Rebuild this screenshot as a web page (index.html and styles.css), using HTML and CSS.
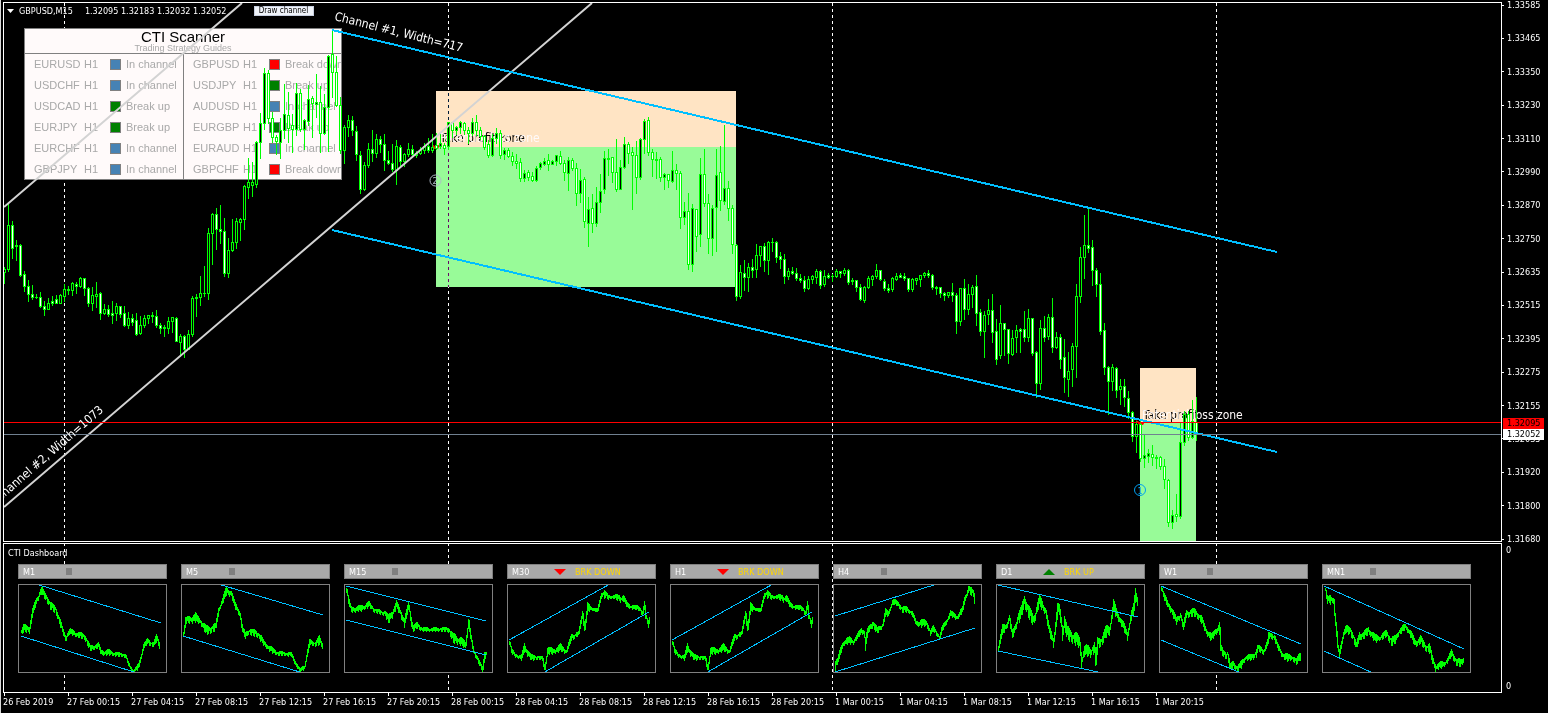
FILE: index.html
```html
<!DOCTYPE html>
<html lang="en">
<head>
<meta charset="utf-8">
<title>GBPUSD,M15</title>
<link rel="stylesheet" href="styles.css">
</head>
<body>
<main class="terminal">
  <section class="plot" aria-label="GBPUSD M15 chart">
    <svg class="layer" viewBox="4 3 1497 538" preserveAspectRatio="none">
      <rect class="loss" x="436" y="91" width="300" height="56"/>
      <rect class="profit" x="436" y="147" width="300" height="140"/>
      <rect class="loss" x="1140" y="368" width="56" height="55"/>
      <rect class="profit" x="1140" y="423" width="56" height="118"/>
      <path class="session" d="M64.5 3V541M448.5 3V541M832.5 3V541M1216.5 3V541"/>
    </svg>
    <div class="scanner">
      <header class="scanner-head">
        <h1>CTI Scanner</h1>
        <p>Trading Strategy Guides</p>
      </header>
      <div class="scanner-body">
        <ul class="pairs">
          <li><span>EURUSD</span><span>H1</span><i class="dot inside"></i><span>In channel</span></li>
          <li><span>USDCHF</span><span>H1</span><i class="dot inside"></i><span>In channel</span></li>
          <li><span>USDCAD</span><span>H1</span><i class="dot up"></i><span>Break up</span></li>
          <li><span>EURJPY</span><span>H1</span><i class="dot up"></i><span>Break up</span></li>
          <li><span>EURCHF</span><span>H1</span><i class="dot inside"></i><span>In channel</span></li>
          <li><span>GBPJPY</span><span>H1</span><i class="dot inside"></i><span>In channel</span></li>
        </ul>
        <ul class="pairs">
          <li><span>GBPUSD</span><span>H1</span><i class="dot down"></i><span>Break down</span></li>
          <li><span>USDJPY</span><span>H1</span><i class="dot up"></i><span>Break up</span></li>
          <li><span>AUDUSD</span><span>H1</span><i class="dot inside"></i><span>In channel</span></li>
          <li><span>EURGBP</span><span>H1</span><i class="dot up"></i><span>Break up</span></li>
          <li><span>EURAUD</span><span>H1</span><i class="dot inside"></i><span>In channel</span></li>
          <li><span>GBPCHF</span><span>H1</span><i class="dot down"></i><span>Break down</span></li>
        </ul>
      </div>
    </div>
    <svg class="layer" viewBox="4 3 1497 538" preserveAspectRatio="none">
      <text class="zone-text dark" x="440" y="142">Take profit zone</text>
      <text class="zone-text pale" x="439" y="142">Potential loss zone</text>
      <text class="zone-text dark" x="1143" y="419">Take profit zone</text>
      <text class="zone-text pale" x="1142" y="419">Potential loss zone</text>
      <path class="entry" d="M432 144l4 3 4-3-2 5h-4zM1136 420l5 3 5-3-3 5h-4z"/>
      <g id="candles" shape-rendering="crispEdges"></g>
      <path class="trend silver" d="M4 207L242 3M4 507L592 3"/>
      <path class="trend blue" d="M332 30L1277 252M332 230L1277 452"/>
      <path class="ask" d="M4 422.5H1501"/>
      <path class="bid" d="M4 434.5H1501"/>
      <text class="channel-text" transform="translate(334 20) rotate(14)">Channel #1, Width=717</text>
      <text class="channel-text" text-anchor="end" transform="translate(104 411) rotate(-41)">Channel #2, Width=1073</text>
      <g class="badge silver"><circle cx="435.500" cy="180.500" r="5.500"/><text x="435" y="184">2</text></g>
      <g class="badge blue"><circle cx="1140" cy="490" r="5.500"/><text x="1140" y="494">1</text></g>
    </svg>
    <div class="caption">
      <svg class="caret" viewBox="0 0 7 4"><path d="M0 0H7L3.500 4z"/></svg>
      <span class="symbol">GBPUSD,M15</span>
      <span class="quotes">1.32095 1.32183 1.32032 1.32052</span>
      <button class="draw" type="button">Draw channel</button>
    </div>
  </section>

  <aside class="scale">
    <ol class="prices">
      <li>1.33585</li><li>1.33465</li><li>1.33350</li><li>1.33230</li><li>1.33110</li><li>1.32990</li>
      <li>1.32870</li><li>1.32750</li><li>1.32635</li><li>1.32515</li><li>1.32395</li><li>1.32275</li>
      <li>1.32155</li><li>1.32035</li><li>1.31920</li><li>1.31800</li><li>1.31680</li>
    </ol>
    <span class="tag tag-ask">1.32095</span>
    <span class="tag tag-bid">1.32052</span>
  </aside>

  <section class="dash">
    <svg class="layer" viewBox="4 544 1497 148" preserveAspectRatio="none">
      <path class="session" d="M64.5 543V692M448.5 543V692M832.5 543V692M1216.5 543V692"/>
    </svg>
    <h2 class="dash-title">CTI Dashboard</h2>
    <div class="cards" id="cards"></div>
  </section>
  <aside class="dash-scale"><span>0</span><span>0</span></aside>

  <ol class="times">
    <li>26 Feb 2019</li><li>27 Feb 00:15</li><li>27 Feb 04:15</li><li>27 Feb 08:15</li><li>27 Feb 12:15</li>
    <li>27 Feb 16:15</li><li>27 Feb 20:15</li><li>28 Feb 00:15</li><li>28 Feb 04:15</li><li>28 Feb 08:15</li>
    <li>28 Feb 12:15</li><li>28 Feb 16:15</li><li>28 Feb 20:15</li><li>1 Mar 00:15</li><li>1 Mar 04:15</li>
    <li>1 Mar 08:15</li><li>1 Mar 12:15</li><li>1 Mar 16:15</li><li>1 Mar 20:15</li>
  </ol>
</main>
<script src="chart.js"></script>
</body>
</html>
```
FILE: styles.css
```css
* { box-sizing: border-box; }
body {
  margin: 0;
  background: #000;
  color: #fff;
  font: 9px/12px "DejaVu Sans Condensed", "DejaVu Sans", sans-serif;
}
ol, ul, h1, h2, p { margin: 0; padding: 0; list-style: none; font-weight: normal; }

.terminal {
  display: grid;
  grid-template-columns: minmax(0, 1fr) 46px;
  grid-template-rows: minmax(0, 1fr) auto 20px;
  min-height: 100vh;
  padding: 2px 0 0 2px;
  border-left: 1px solid #d8d8d8;
}
.plot, .dash { position: relative; border: 1px solid #fff; overflow: hidden; }
.layer { position: absolute; inset: 0; width: 100%; height: 100%; overflow: hidden; }

/* main chart */
.loss { fill: #ffe4c4; }
.profit { fill: #98fb98; }
.session { stroke: #fff; stroke-dasharray: 3 3; fill: none; mix-blend-mode: difference; }
.trend { fill: none; stroke-width: 2; }
.trend.silver { stroke: #d3d3d3; }
.trend.blue { stroke: #00bfff; shape-rendering: crispEdges; }
.ask { stroke: #f00; }
.bid { stroke: #708090; }
.entry { fill: #f00; }
.zone-text { font-size: 12px; }
.dark { fill: #000; }
.pale { fill: #fffafa; }
.channel-text { font-size: 12px; fill: #fff; }
.badge circle { fill: none; stroke: currentColor; }
.badge text { font-size: 9px; fill: currentColor; text-anchor: middle; }
.badge.silver { color: #b0bcc8; }
.badge.blue { color: #00a0f0; }

.caption {
  position: absolute;
  top: 2px;
  left: 3px;
  display: flex;
  align-items: center;
  height: 12px;
}
.caret { width: 7px; height: 4px; fill: #fff; }
.symbol { margin-left: 5px; }
.quotes { margin-left: 12px; }
.draw {
  margin-left: 27px;
  width: 60px;
  height: 10px;
  padding: 0;
  border: 1px solid #c8d0e0;
  background: #f0f4fa;
  color: #000;
  font: 8px/8px "DejaVu Sans Condensed", sans-serif;
}

/* scanner panel */
.scanner {
  position: absolute;
  top: 25px;
  left: 20px;
  width: 318px;
  border: 1px solid #808080;
  background: #fffafa;
  color: #a9a9a9;
  font: 11px/20px "Liberation Sans", Arial, sans-serif;
  overflow: hidden;
}
.scanner-head { height: 25px; border-bottom: 1px solid #808080; text-align: center; }
.scanner-head h1 { font-size: 15px; line-height: 15px; color: #000; }
.scanner-head p { font-size: 9px; line-height: 9px; }
.scanner-body { display: grid; grid-template-columns: 1fr 1fr; }
.pairs { display: grid; row-gap: 1px; padding-left: 9px; min-width: 0; overflow: hidden; }
.pairs + .pairs { border-left: 1px solid #808080; }
.pairs li {
  display: grid;
  grid-template-columns: 50px 26px 16px 1fr;
  align-items: center;
  height: 20px;
  white-space: nowrap;
}
.dot { width: 11px; height: 11px; border: 1px solid #808080; }
.dot.inside { background: #4682b4; }
.dot.up { background: #008000; }
.dot.down { background: #f00; }

/* price scale */
.scale { position: relative; }
.prices {
  display: flex;
  flex-direction: column;
  justify-content: space-between;
  position: absolute;
  inset: -3px 0;
}
.prices li { display: flex; align-items: center; height: 12px; }
.prices li::before { content: ""; width: 2px; height: 1px; margin-right: 3px; background: #fff; }
.tag { position: absolute; left: 1px; width: 41px; height: 11px; padding-left: 4px; line-height: 11px; color: #000; }
.tag-ask { top: 77%; background: #f00; }
.tag-bid { top: 79%; background: #fff; }

/* dashboard */
.dash { margin-top: 1px; height: 150px; padding: 3px 14px 0; }
.dash-title { position: relative; font-size: 9px; margin-left: -10px; line-height: 12px; }
.cards { position: relative; display: flex; gap: 14px; margin-top: 5px; }
.card { width: 149px; background: #000; }
.card-head {
  display: grid;
  grid-template-columns: 42px 21px 1fr;
  align-items: center;
  height: 15px;
  margin-bottom: 5px;
  padding-left: 4px;
  border: 1px solid #808080;
  background: #a9a9a9;
}
.card-head svg { width: 12px; height: 7px; }
.card-head b { color: #ffd700; font-weight: normal; }
.mini { display: block; width: 149px; height: 89px; border: 1px solid #808080; }
.mini .bars { stroke: #0f0; fill: none; }
.mini .edge { stroke: #00bfff; fill: none; }
.dash-scale {
  display: flex;
  flex-direction: column;
  justify-content: space-between;
  padding: 2px 0 1px 4px;
}

/* time axis */
.times { display: flex; white-space: nowrap; }
.times li { flex: 0 0 64px; }
.times li::before { content: ""; display: block; width: 1px; height: 3px; margin-left: 1px; background: #fff; }
```
FILE: chart.js
```javascript
// One candle every 4 units: high, body top, body bottom, low, 1 = rising / 0 = falling
const candles = `267,269,272,283,1 203,225,269,271,1 221,225,248,258,0 240,245,246,260,0 244,245,275,276,0 271,274,286,291,0 280,286,294,301,0 285,294,297,299,0 294,297,297,298,0 292,297,306,307,0
301,306,309,315,0 298,303,309,309,1 296,301,303,305,0 295,299,303,303,0 294,295,303,303,1 284,289,296,301,1 286,289,290,294,1 282,283,290,295,1 282,284,286,293,0 277,278,286,287,1
278,278,288,295,0 287,288,303,306,0 287,295,303,310,1 282,294,296,307,1 292,293,313,319,0 304,309,313,314,1 305,309,314,316,0 301,313,315,323,0 303,306,313,320,1 306,306,314,317,0
306,313,325,326,0 312,318,325,328,1 314,318,322,325,0 313,320,334,335,0 316,325,333,334,1 315,318,325,327,1 315,315,318,323,1 312,315,316,322,1 310,316,325,327,0 323,325,328,333,0
325,327,328,336,0 317,321,328,333,1 317,317,321,332,1 317,318,341,341,0 334,336,342,356,1 335,336,349,357,0 330,334,349,349,1 296,298,334,336,1 294,297,298,316,1 276,293,297,305,1
266,293,293,296,1 228,233,293,299,1 213,214,233,264,1 208,214,229,249,0 205,229,231,243,0 218,231,273,276,0 238,250,273,277,1 219,242,250,251,1 218,221,242,248,1 218,219,222,240,1
185,186,219,229,1 158,182,187,198,1 162,182,185,196,1 141,142,184,187,1 113,123,142,158,1 68,73,123,129,1 70,73,118,123,0 112,118,137,142,0 135,137,141,154,0 118,130,142,158,1
84,114,130,138,1 92,115,128,142,0 114,125,129,152,0 83,93,129,135,1 89,93,129,131,0 119,120,129,149,1 85,99,121,125,1 96,98,103,137,0 74,102,104,117,1 86,102,133,152,0
94,107,133,134,1 55,56,107,151,1 29,54,72,97,0 56,72,105,106,0 97,105,150,153,0 125,127,150,163,1 115,120,127,136,1 116,120,130,135,0 126,131,154,160,0 151,155,189,193,0
162,165,189,190,1 143,149,165,167,1 130,149,153,161,0 134,139,153,157,1 136,139,144,152,0 134,144,160,170,0 151,160,163,164,0 144,163,169,171,0 140,146,170,184,1 145,147,161,165,0
153,154,161,166,1 143,149,154,156,1 145,149,154,156,0 151,153,155,157,1 147,150,153,154,1 143,146,150,153,1 138,146,150,152,0 134,147,150,152,1 133,145,148,149,0 134,143,146,148,1
143,145,148,154,0 122,122,146,149,1 122,122,130,137,0 126,127,130,134,1 121,122,127,133,1 122,123,130,134,0 127,130,133,143,0 118,122,133,135,1 115,122,130,135,0 127,130,136,139,0
135,136,147,149,0 140,144,155,157,0 134,138,155,156,1 128,133,138,143,1 130,133,155,158,0 148,150,154,159,1 148,150,156,157,0 152,156,161,165,0 154,161,163,168,0 158,162,178,181,0
170,173,178,181,1 170,172,177,180,0 172,176,180,181,0 166,168,180,181,1 162,163,167,169,1 158,161,164,165,1 154,160,164,170,0 160,161,164,164,1 155,155,161,165,1 151,156,163,164,0
160,163,172,180,0 157,160,173,190,1 158,160,168,170,0 163,168,193,205,0 169,180,193,202,1 177,179,221,227,0 197,209,223,246,1 194,208,223,232,0 187,202,223,226,1 174,191,202,212,1
151,158,189,193,1 149,158,159,175,1 157,157,172,182,0 139,172,189,191,0 160,167,189,189,1 137,144,167,168,1 142,144,153,163,0 147,152,155,209,0 141,155,177,193,0 138,139,177,179,1
119,121,139,153,1 117,120,152,155,0 149,152,159,176,0 152,159,160,178,0 157,159,177,181,0 173,174,177,189,1 174,174,180,187,0 151,170,181,182,1 164,170,173,189,0 171,173,217,228,0
202,211,217,224,1 193,211,264,269,0 204,208,264,271,1 209,209,236,251,0 158,174,234,246,1 149,174,203,206,0 194,203,238,253,0 205,208,238,255,1 149,175,207,251,1 146,172,200,210,0
125,188,201,204,1 181,188,208,220,0 205,208,244,253,0 244,245,296,300,0 265,272,296,298,1 260,273,277,290,0 263,267,277,291,1 259,267,270,277,0 244,255,269,277,1 246,246,255,266,1
243,246,260,271,0 241,242,260,274,1 238,242,242,251,1 241,242,257,262,0 252,256,259,268,0 254,259,276,283,0 268,271,276,279,1 267,271,273,274,0 268,273,278,280,0 274,278,280,282,0
276,280,288,291,0 276,279,288,289,1 275,276,279,283,1 269,271,277,283,1 270,271,285,288,0 270,276,284,286,1 273,275,277,278,0 274,276,276,281,0 269,271,276,277,1 271,271,273,277,0
268,270,273,275,1 269,270,282,284,0 278,280,281,284,0 280,280,287,291,0 284,287,299,300,0 286,287,300,302,1 276,278,287,288,1 275,276,279,285,1 264,270,276,278,1 270,270,279,280,0
279,281,288,290,0 284,288,290,292,0 277,278,289,291,1 273,276,279,280,1 273,275,277,277,0 273,276,278,280,0 278,278,289,291,0 278,279,289,291,1 278,278,280,284,1 275,275,279,286,1
272,273,275,277,1 270,273,275,277,0 274,275,287,289,0 286,287,288,294,0 287,287,293,297,0 292,293,295,300,0 292,292,295,297,1 283,292,295,301,0 293,295,321,333,0 288,288,321,325,1
279,288,309,319,0 284,294,309,314,1 285,287,294,307,1 275,286,313,325,0 309,312,331,335,0 311,315,331,357,1 299,310,314,324,1 294,310,332,342,0 319,331,359,364,0 305,323,355,358,1
323,323,329,355,0 329,329,353,363,0 330,338,354,355,1 325,330,337,352,1 328,329,331,352,0 311,329,337,341,0 309,318,337,341,1 318,318,353,355,0 351,352,383,397,0 320,328,383,389,1
316,328,337,341,0 314,317,336,339,1 298,317,347,352,0 332,337,347,348,1 334,337,359,368,0 339,357,377,392,0 352,371,379,396,1 343,346,369,386,1 284,296,346,377,1 247,257,296,302,1
215,245,257,278,1 208,245,248,252,0 240,247,270,285,0 268,270,284,296,0 273,284,331,334,0 323,330,367,374,0 366,367,381,414,0 364,367,381,390,1 367,368,390,397,0 379,386,389,404,1
379,386,397,406,0 391,398,412,418,0 411,412,436,441,0 421,424,436,452,1 421,424,458,461,0 435,455,458,467,1 449,453,456,462,1 445,454,457,465,0 455,457,458,468,0 456,457,466,469,0
459,466,479,488,0 479,480,522,526,0 510,515,522,528,1 494,514,516,521,0 423,442,516,518,1 411,414,442,445,1 411,414,437,440,0 400,421,437,438,1 397,422,434,440,0`.split(/\s+/).map(s => s.split(",").map(Number));

document.getElementById("candles").innerHTML = candles.map(([high, top, bottom, low, rising], i) => {
  const x = 4 + 4 * i;
  const fill = rising ? "#000" : "#fff";
  const inner = bottom - top > 1 ? `<rect x="${x}" y="${top + 1}" width="1" height="${bottom - top - 1}" fill="${fill}"/>` : "";
  return `<rect x="${x}" y="${high}" width="1" height="${low - high + 1}" fill="#0f0"/>` +
    `<rect x="${x - 1}" y="${top}" width="3" height="${bottom - top + 1}" fill="#0f0"/>${inner}`;
}).join("");

// Dashboard series: x, middle, half spread
const half = "1,57,2 3,65,3 7,70,2 13,72,3 16,62,5 20,68,4 23,72,3 30,72,2 34,73,2 36,84,3 39,65,4 45,66,3 52,62,4 58,66,3 63,52,4 70,48,2 74,28,4 76,44,4 79,22,5 83,23,2 89,25,2 93,9,3 96,8,5 100,12,2 106,11,2 112,13,4 115,12,4 119,20,3 126,22,2 131,23,3 134,28,3 136,20,4 137,30,3 140,38,4 141,32,4";
const frames = [
  { name: "M1", edges: "M17-1L142 38M2 51L118 88", data: "2,47,3 4,43,4 10,43,5 13,27,4 17,15,4 22,5,4 27,12,4 31,20,4 36,24,4 41,38,4 45,50,3 46,53,4 50,46,3 58,49,3 65,51,3 71,63,3 79,60,3 82,67,3 90,67,3 98,69,2 106,70,2 110,81,2 114,86,1 119,81,3 124,61,3 128,56,3 134,59,3 137,53,4 140,59,4" },
  { name: "M5", edges: "M36-1L141 30M1 51L121 88", data: "1,48,3 3,35,3 8,34,4 13,32,5 18,36,3 24,45,5 33,42,4 36,25,3 41,13,4 44,5,5 49,8,4 52,18,4 57,28,3 60,44,3 63,50,4 66,46,3 75,48,4 82,58,3 87,63,3 92,66,3 96,68,2 109,69,2 113,78,2 118,85,2 122,81,3 127,57,3 133,58,3 137,55,5 140,60,3" },
  { name: "M15", edges: "M1 1L141 36M1 35L141 70", data: "1,4,3 3,15,4 6,24,3 15,23,3 24,19,3 29,25,2 40,28,3 43,34,5 48,26,5 51,19,4 55,27,4 59,37,5 63,20,4 67,43,4 72,40,3 77,44,2 95,44,2 103,44,3 108,53,5 115,55,5 120,60,4 123,35,3 125,50,4 128,66,2 133,75,3 137,84,3 139,70,4 141,67,5" },
  { name: "M30", signal: "down", text: "BRK DOWN", edges: "M1 55L102-1M35 88L141 27", data: half },
  { name: "H1", signal: "down", text: "BRK DOWN", edges: "M1 55L102-1M35 88L141 27", data: half },
  { name: "H4", edges: "M1 31L103-1M1 87L141 43", data: "1,79,8 3,76,4 6,66,4 9,57,3 15,55,4 19,56,3 23,51,3 27,45,4 29,46,3 31,58,8 33,46,3 38,38,5 43,45,3 48,40,3 51,27,4 54,28,3 58,16,3 63,18,3 68,24,3 73,24,3 78,28,3 82,38,3 86,37,5 92,38,3 96,47,3 99,43,3 105,52,2 107,45,3 112,36,3 116,28,3 123,32,3 128,24,3 130,14,4 134,4,4 139,8,4 140,14,4" },
  { name: "D1", signal: "up", text: "BRK UP", edges: "M1 0L141 32M1 66L106 88", data: "1,62,4 5,44,5 8,42,5 12,33,4 15,50,4 20,34,6 24,27,7 27,14,7 31,26,7 36,35,7 42,15,6 48,25,5 52,45,5 56,56,6 60,26,9 62,24,5 65,48,8 67,35,10 70,48,7 77,52,8 82,57,6 84,76,7 87,65,6 93,66,6 97,62,6 98,79,8 100,58,6 105,54,6 108,47,6 112,44,6 116,20,7 120,30,5 125,38,4 130,50,5 133,32,6 136,25,7 138,8,6 140,15,5" },
  { name: "W1", edges: "M1 1L141 59M1 55L81 88", data: "1,3,2 5,14,4 10,23,4 16,35,4 20,30,4 23,41,4 26,28,5 35,27,4 41,34,4 46,46,4 51,52,4 56,45,4 59,42,7 60,62,4 63,68,4 67,69,5 70,82,4 73,79,4 77,83,3 81,79,4 85,72,3 91,72,3 96,67,5 97,62,3 103,66,3 107,58,4 108,50,3 114,51,4 117,60,3 121,68,3 126,72,4 131,72,3 136,76,3 140,70,5" },
  { name: "MN1", edges: "M1 1L141 64M1 66L50 88", data: "2,5,4 4,15,3 7,14,5 10,14,4 11,28,6 13,46,5 14,60,5 16,68,4 19,52,6 22,44,4 27,45,5 30,52,4 33,61,4 36,50,5 40,50,4 45,45,4 52,53,4 57,52,3 63,48,4 68,56,5 72,54,4 75,47,4 82,41,3 87,48,4 92,58,4 97,54,5 102,62,4 106,62,6 109,74,4 112,82,4 115,80,4 120,79,3 124,75,3 128,68,4 133,76,4 138,78,4 140,74,3" }
];
const icons = {
  flat: '<rect x="1" width="6" height="7" fill="#808080"/>',
  down: '<path d="M0 1H12L6 7z" fill="#f00"/>',
  up: '<path d="M0 7H12L6 1z" fill="#008000"/>'
};

function bars(data) {
  const keys = data.split(" ").map(s => s.split(",").map(Number));
  let path = "", k = 0, previous = keys[0][1];
  for (let x = keys[0][0]; x <= keys[keys.length - 1][0]; x++) {
    while (k < keys.length - 2 && x > keys[k + 1][0]) k++;
    const [x0, y0, s0] = keys[k], [x1, y1, s1] = keys[k + 1];
    const t = (x - x0) / (x1 - x0);
    const mid = y0 + (y1 - y0) * t, spread = s0 + (s1 - s0) * t;
    const up = Math.abs(Math.sin(x * 12.9)), down = Math.abs(Math.sin(x * 7.3 + 1));
    const high = Math.round(Math.min(mid - spread * up, previous));
    const low = Math.round(Math.max(mid + spread * down, previous)) + 1;
    path += `M${x + 0.5} ${Math.max(high, 1)}V${Math.min(low, 87)}`;
    previous = mid;
  }
  return path;
}

document.getElementById("cards").innerHTML = frames.map(f => `<article class="card">
  <header class="card-head"><span>${f.name}</span><svg viewBox="0 0 12 7">${icons[f.signal || "flat"]}</svg><b>${f.text || ""}</b></header>
  <svg class="mini" viewBox="0 0 147 87" shape-rendering="crispEdges"><path class="bars" d="${bars(f.data)}"/><path class="edge" d="${f.edges}"/></svg>
</article>`).join("");
```
